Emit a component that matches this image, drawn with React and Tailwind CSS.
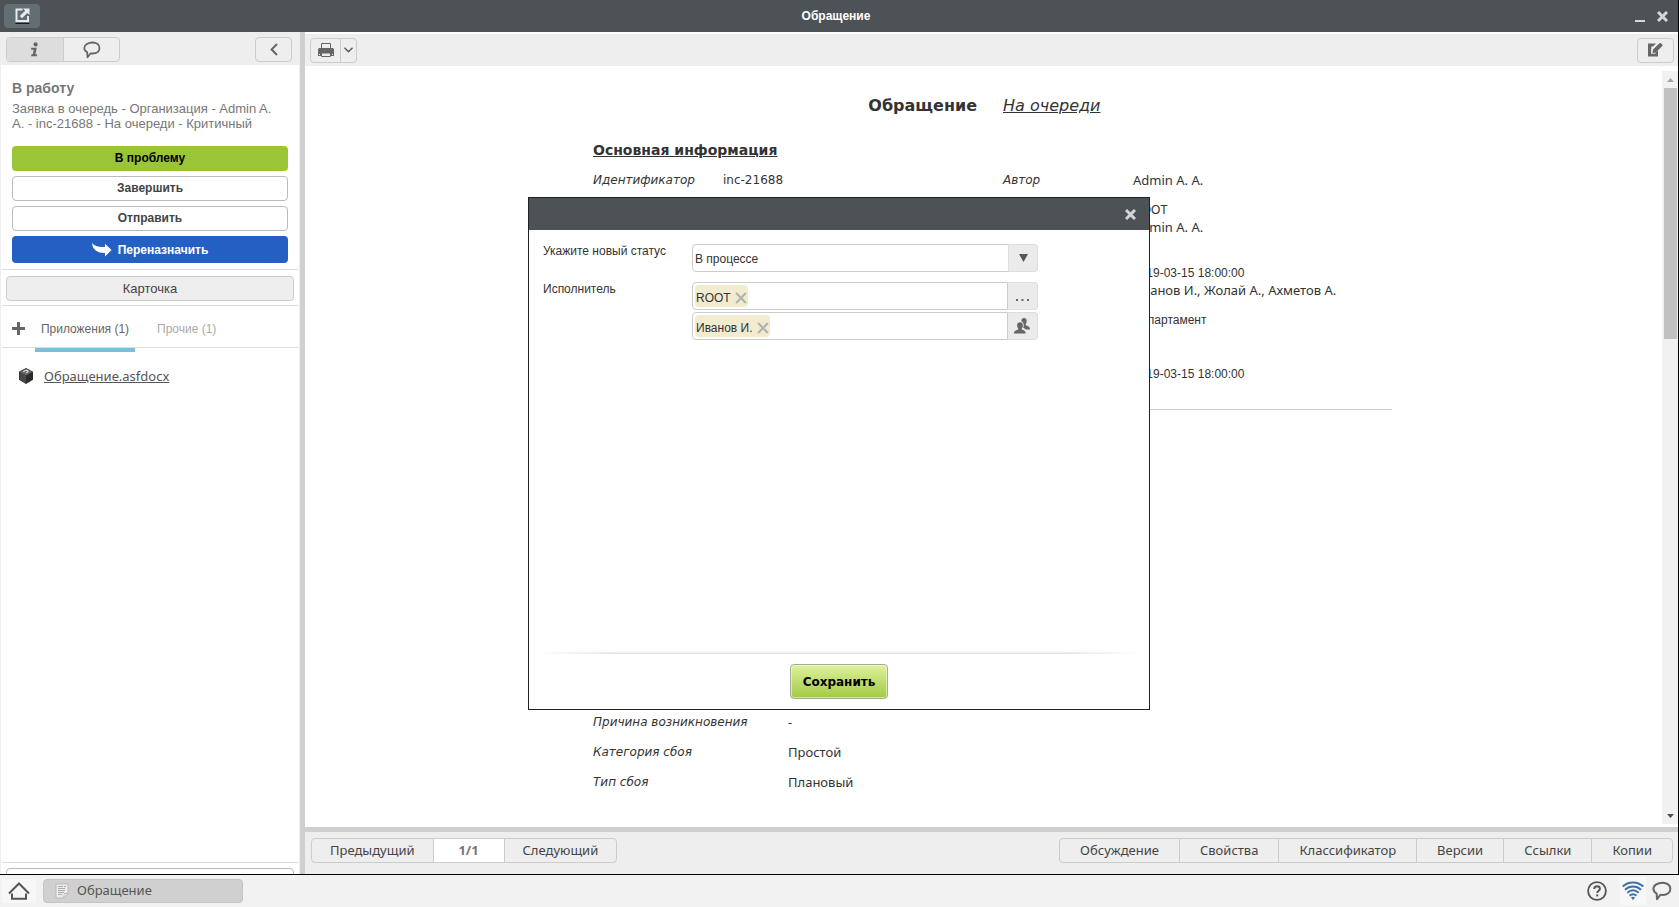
import React, { useState } from "react";
import clsx from "clsx";

const arial = "font-['Liberation_Sans',Arial,sans-serif]";
const noto = "font-['Noto_Sans',sans-serif]";
const verdana = "font-['DejaVu_Sans',Verdana,sans-serif]";

/* ---------- icons ---------- */

const OpenIcon = () => (
  <svg width="15" height="16" viewBox="0 0 15 16" fill="none">
    <path d="M7.500 1.500H1.500v11.500h11.500V8" stroke="#e8eaeb" strokeWidth="2" />
    <path d="M8 .500h6.500V7L12.300 4.900 7 10.200 4.800 8l5.300-5.300z" fill="#e8eaeb" />
    <path d="M.500 15.500h14" stroke="#16191b" />
  </svg>
);

const InfoIcon = () => (
  <svg width="10" height="15" viewBox="0 0 10 15" fill="#666">
    <circle cx="5.600" cy="2.400" r="2.100" />
    <path d="M1.200 5.800h5.600l-1.400 6.400h1.800l-.5 2H1l.5-2h1.300l.9-4.400H1z" />
  </svg>
);

const BubbleIcon = ({ size = 18, width = 1.8 }) => (
  <svg width={size} height={size} viewBox="0 0 18 18" fill="none" stroke="#666" strokeWidth={width} strokeLinejoin="round">
    <path d="M9.500 1.500c4 0 7 2.300 7 5.500s-2.800 5.500-6.800 5.500c-.8 0-1.400 0-2-.2L4.500 16.300l-.3-5C2.300 10.200 1.300 8.800 1.300 7c0-3.200 4-5.500 8.200-5.500z" />
  </svg>
);

const BackIcon = () => (
  <svg width="8" height="13" viewBox="0 0 8 13" fill="none" stroke="#666" strokeWidth="2">
    <path d="M7 1 1.600 6.500 7 12" />
  </svg>
);

const PrinterIcon = () => (
  <svg width="16" height="16" viewBox="0 0 16 16" fill="none">
    <path d="M3.500 6V1.500h9V6" stroke="#666" />
    <path d="M1.500 6h13A1.500 1.500 0 0 1 16 7.500V14h-3v-3H3v3H0V7.500A1.500 1.500 0 0 1 1.500 6z" fill="#666" />
    <path d="M3.500 11v3.500h9V11z" fill="#eee" stroke="#666" />
    <path d="M1.500 12v1M14.500 12v1" stroke="#eee" />
  </svg>
);

const ChevronDown = () => (
  <svg width="9" height="6" viewBox="0 0 9 6" fill="none" stroke="#555" strokeWidth="1.400">
    <path d="m.5.800 4 4 4-4" />
  </svg>
);

const EditIcon = () => (
  <svg width="15" height="14" viewBox="0 0 15 14">
    <path d="M0 .500h8L5 3.500H3.300v7.200H7.500V9.500L10 7.800V13.500H0z" fill="#666" />
    <path d="M4.300 10.200 5 6.500 11.500.300Q12.400-.300 13.200.500l1.100 1.100q.6.800 0 1.500L7.900 9.400z" fill="#666" />
    <path d="M3.800 10.700V6.300L8.900 1.300" stroke="#eee" fill="none" />
  </svg>
);

const ForwardIcon = () => (
  <svg width="20" height="14" viewBox="0 0 20 14" fill="#fff">
    <path d="M0 0c2.500 3.300 6.500 4.500 13 4V.800L19.500 7 13 13.500V10C6 10.300.500 7 0 0z" />
  </svg>
);

const PlusIcon = () => (
  <svg width="13" height="13" viewBox="0 0 13 13" stroke="#666" strokeWidth="3">
    <path d="M6.500 0v13M0 6.500h13" />
  </svg>
);

const CubeIcon = () => (
  <svg width="14" height="16" viewBox="0 0 14 16">
    <path d="M7 0 14 3.700v8L7 16l-7-4.300v-8z" fill="#2b2b2b" />
    <path d="M7 .500 13.400 3.900 7 7.500.600 3.900z" fill="#666" />
    <path d="M7 7.500v8L.600 11.500V4.300z" fill="#484848" />
    <path d="M4.300 3.800q2-2 4.300-1.200 1.400 1-1.500 2.200" fill="none" stroke="#ddd" strokeWidth="1.100" />
  </svg>
);

const CrossIcon = ({ size = 11, color = "#d4d6d7", width = 3 }) => (
  <svg width={size} height={size} viewBox="0 0 11 11" stroke={color} strokeWidth={width}>
    <path d="m1 1 9 9M10 1l-9 9" />
  </svg>
);

const PeopleIcon = () => (
  <svg width="17" height="16" viewBox="0 0 17 16" fill="#666">
    <path d="M7.300 3.200C7.300 1.300 8.300 0 10 0s2.800 1.300 2.700 3c0 1.500-.4 2.300-1 3v1.200c2 .9 4.300 1.200 4.300 4.300h-4.300c-.7-1-1.700-1.300-2.600-1.700C10.300 7.500 10 4.300 7.300 3.200z" />
    <path d="M6 4.200c1.900 0 2.900 1.300 2.900 3 0 1.500-.4 2.400-1.100 3.100v1.100c2 .9 3.900 1.100 3.900 4.100H0c0-3 2.200-3.200 4.200-4.100v-1.100c-.7-.7-1.100-1.600-1.100-3.100 0-1.700 1-3 2.900-3z" />
  </svg>
);

const HomeIcon = () => (
  <svg width="22" height="18" viewBox="0 0 22 18" fill="none" stroke="#555" strokeWidth="2">
    <path d="M1 11.500 11 1.500l10 10" />
    <path d="M4 11.500v5.300h14v-5.300" />
  </svg>
);

const DocIcon = () => (
  <svg width="14" height="16" viewBox="0 0 14 16" fill="none">
    <path d="M1 1h12v9.500L8.500 15H1z" fill="#ececec" stroke="#b9b9b9" />
    <path d="M3 3.500h5M3 5.500h7M3 7.500h7M3 9.500h6M3 11.500h4M9 3.500h2" stroke="#aaa" />
    <path d="M13 10.500H9.500L8.500 15z" fill="#fafafa" stroke="#b9b9b9" />
  </svg>
);

const HelpIcon = () => (
  <svg width="20" height="20" viewBox="0 0 20 20" fill="none" stroke="#555">
    <circle cx="10" cy="10" r="8.900" strokeWidth="1.800" />
    <path d="M7.200 8c0-1.800 1.200-2.800 2.900-2.800 1.600 0 2.800 1 2.800 2.500 0 2-2.700 2.100-2.700 4.400" strokeWidth="1.900" />
    <path d="M10.200 13.400v2" strokeWidth="2" />
  </svg>
);

const SignalIcon = () => (
  <svg width="22" height="20" viewBox="0 0 22 20" fill="none" stroke="#3b73a8" strokeWidth="2">
    <path d="M.700 5.500C6.500 0 15.500 0 21.300 5.500" />
    <path d="M3 8.700c4.700-4.200 11.300-4.200 16 0" />
    <path d="M5.300 11.700c3.500-2.900 7.900-2.900 11.400 0" />
    <path d="M7.500 14.600c2.200-1.700 4.800-1.700 7 0" />
    <path d="M9 16.300q2-1 4 0l-2 3z" fill="#3b73a8" stroke="none" />
  </svg>
);

/* ---------- data ---------- */

const bottomTabs = ["Обсуждение", "Свойства", "Классификатор", "Версии", "Ссылки", "Копии"];

const failureInfo = [
  { label: "Причина возникновения", value: "-" },
  { label: "Категория сбоя", value: "Простой" },
  { label: "Тип сбоя", value: "Плановый" },
];

/* ---------- parts ---------- */

function TitleBar() {
  return (
    <header className="grid h-8 shrink-0 grid-cols-[1fr_auto_1fr] items-center bg-[#4d5256] pl-1 pr-2.5">
      <button aria-label="Открыть" className="flex h-6 w-9 items-center justify-center rounded bg-[#626d74]">
        <OpenIcon />
      </button>
      <h1 className="text-xs font-bold text-white">Обращение</h1>
      <div className="flex items-center justify-end gap-3">
        <button aria-label="Свернуть" className="flex h-3 w-2.5 items-end pt-2">
          <span className="mt-1 h-0.5 w-full bg-[#d4d6d7]" />
        </button>
        <button aria-label="Закрыть">
          <CrossIcon />
        </button>
      </div>
    </header>
  );
}

function Sidebar() {
  const [tab, setTab] = useState("info");

  return (
    <aside className="flex w-[300px] shrink-0 flex-col border-x border-[#eee] bg-white">
      <div className="flex h-[33px] shrink-0 items-end justify-between bg-[#eee] pb-[3px] pl-[5px] pr-[7px]">
        <div className="flex h-[25px] overflow-hidden rounded border border-[#ccc]">
          <button
            aria-label="Информация"
            onClick={() => setTab("info")}
            className={clsx("flex w-14 items-center justify-center", tab === "info" && "bg-[#ddd]")}
          >
            <InfoIcon />
          </button>
          <button
            aria-label="Комментарии"
            onClick={() => setTab("chat")}
            className={clsx("flex w-14 items-center justify-center border-l border-[#ccc]", tab === "chat" && "bg-[#ddd]")}
          >
            <BubbleIcon />
          </button>
        </div>
        <button aria-label="Скрыть панель" className="flex h-[25px] w-[37px] items-center justify-center rounded border border-[#ccc]">
          <BackIcon />
        </button>
      </div>

      <div className="pl-[11px] pr-5 pt-4 text-[#777]">
        <h2 className="text-sm font-bold leading-[15px]">В работу</h2>
        <p className="mt-[5px] text-[13px] leading-[15px]">
          Заявка в очередь - Организация - Admin A. A. - inc-21688 - На очереди - Критичный
        </p>
      </div>

      {/* Actions */}
      <div className="mt-[15px] flex flex-col gap-[5px] px-[11px] pb-1.5 text-xs font-bold text-[#444]">
        <button className="h-[25px] rounded bg-[#9bc437] pb-0.5 text-black">В проблему</button>
        <button className="h-[25px] rounded border border-[#bbb] pb-0.5">Завершить</button>
        <button className="h-[25px] rounded border border-[#bbb] pb-0.5">Отправить</button>
        <button className="flex h-[27px] items-center justify-center gap-1.5 rounded bg-[#2460c3] text-white">
          <ForwardIcon />
          Переназначить
        </button>
      </div>

      <div className="mx-px border-y border-[#ddd] px-1 pb-1 pt-1.5">
        <button className="h-[25px] w-full rounded border border-[#ccc] bg-[#eee] text-[13px] text-[#444]">Карточка</button>
      </div>

      {/* Attachments */}
      <div className="mx-px flex h-[42px] items-center border-b border-[#ddd] pl-2.5 pt-1 text-xs">
        <button aria-label="Добавить">
          <PlusIcon />
        </button>
        <button className="relative ml-2.5 h-[38px] w-[100px] text-[#666] after:absolute after:inset-x-0 after:-bottom-1 after:h-1 after:bg-[#7bbfe0]">
          Приложения (1)
        </button>
        <button className="ml-[22px] text-[#aaa]">Прочие (1)</button>
      </div>

      <ul className="px-[18px] pt-[19px]">
        <li className="flex items-center gap-[11px]">
          <CubeIcon />
          <a href="#file" className={clsx(noto, "text-[13px] leading-[18px] text-[#555] underline")}>
            Обращение.asfdocx
          </a>
        </li>
      </ul>

      {/* Collapsed footer, only the top edge of its box is visible */}
      <div className="mx-px mt-auto h-3 shrink-0 overflow-hidden border-t border-[#ddd] px-1 pt-[5px]">
        <div className="h-6 rounded border border-[#bbb]" />
      </div>
    </aside>
  );
}

function Document() {
  return (
    <div className="flex min-h-0 flex-1 bg-white">
      <article className={clsx(verdana, "min-w-0 flex-1 overflow-hidden pl-[18px] pt-7 text-xs leading-[17px] text-[#333]")}>
        <div className="mx-auto w-[799px]">
          <div className="grid grid-cols-[384px_1fr] gap-[26px] text-base leading-6">
            <h2 className="text-right font-bold">Обращение</h2>
            <span className="italic underline">На очереди</span>
          </div>

          <h3 className="mt-[22px] text-sm font-bold leading-5 underline">Основная информация</h3>

          <div className="mt-3 grid grid-cols-[410px_1fr] border-b border-[#ccc] pb-[26px]">
            <dl className="grid grid-cols-[130px_1fr] content-start">
              <dt className="italic">Идентификатор</dt>
              <dd>inc-21688</dd>
            </dl>
            <dl className="grid grid-cols-[130px_1fr] gap-y-[13px]">
              <dt className="italic">Автор</dt>
              <dd className={clsx(noto, "text-[13px] leading-[17px]")}>Admin A. A.</dd>
              <dd className={clsx(noto, "col-start-2 text-[13px] leading-[17px]")}>
                <p className={clsx(arial, "text-xs leading-[17px]")}>ROOT</p>
                <p>Admin A. A.</p>
              </dd>
              <dd className={clsx(noto, "col-start-2 pt-4 text-[13px] leading-[17px]")}>
                <p className={clsx(arial, "text-xs leading-[17px]")}>2019-03-15 18:00:00</p>
                <p>Иванов И., Жолай А., Ахметов А.</p>
              </dd>
              <dd className={clsx(arial, "col-start-2")}>Департамент</dd>
              <dd className={clsx(arial, "col-start-2 pt-6")}>2019-03-15 18:00:00</dd>
            </dl>
          </div>

          <dl className="mt-[304px] grid grid-cols-[195px_1fr] gap-y-[13px]">
            {failureInfo.map((row) => (
              <React.Fragment key={row.label}>
                <dt className="italic">{row.label}</dt>
                <dd className={clsx(noto, "text-[13px] leading-[17px]")}>{row.value}</dd>
              </React.Fragment>
            ))}
          </dl>
        </div>
      </article>

      {/* Scrollbar */}
      <div className="mb-[3px] mt-[5px] flex w-4 shrink-0 flex-col items-center bg-[#f1f1f1]">
        <span className="flex h-[17px] items-center">
          <svg width="7" height="4" viewBox="0 0 7 4" fill="#a3a3a3"><path d="M0 4 3.500 0 7 4z" /></svg>
        </span>
        <div className="h-1/3 w-[13px] bg-[#c1c1c1]" />
        <span className="mt-auto flex h-[17px] items-center">
          <svg width="7" height="4" viewBox="0 0 7 4" fill="#505050"><path d="M0 0h7L3.500 4z" /></svg>
        </span>
      </div>
    </div>
  );
}

function BottomBar() {
  return (
    <footer className={clsx(noto, "flex h-[47px] shrink-0 justify-between border-t-[5px] border-[#cfcfcf] bg-[#eee] pl-1.5 pr-[5px] pt-1.5 text-[13px] text-[#444]")}>
      <div className="flex h-[25px] divide-x divide-[#ccc] overflow-hidden rounded border border-[#ccc]">
        <button className="px-[18px]">Предыдущий</button>
        <span className="flex w-[71px] items-center justify-center bg-white font-bold text-[#777]">1/1</span>
        <button className="px-[18px]">Следующий</button>
      </div>
      <div className="flex h-[25px] divide-x divide-[#ccc] rounded border border-[#ccc]">
        {bottomTabs.map((name) => (
          <button key={name} className="px-5">{name}</button>
        ))}
      </div>
    </footer>
  );
}

function TagField({ id, tag, children, buttonLabel }) {
  return (
    <div className="flex h-7">
      <div className="flex min-w-0 flex-1 items-center rounded-l border border-[#ccc] bg-white pl-0.5">
        <span className="flex h-[22px] shrink-0 items-center gap-1 rounded-sm bg-[#f1ecd0] px-px pt-[3px] text-[#333]">
          {tag}
          <button aria-label={`Удалить ${tag}`}>
            <CrossIcon size={12} color="#b3b3ad" width={2} />
          </button>
        </span>
        <input id={id} aria-label="Исполнитель" className="min-w-0 flex-1 outline-none" />
      </div>
      <button aria-label={buttonLabel} className="flex w-[30px] items-center justify-center rounded-r border border-l-0 border-[#ddd] bg-[#ebebeb]">
        {children}
      </button>
    </div>
  );
}

function StatusDialog() {
  const [status, setStatus] = useState("В процессе");

  return (
    <div className="fixed inset-0 flex items-center justify-center pr-px">
      <div role="dialog" aria-label="Статус" className="flex h-[513px] w-[622px] flex-col border border-[#222] bg-white text-xs text-[#333]">
        <div className="flex h-8 shrink-0 items-center justify-end bg-[#4d5256] pr-[13px]">
          <button aria-label="Закрыть окно">
            <CrossIcon />
          </button>
        </div>

        <div className="grid flex-1 grid-cols-[149px_346px] content-start gap-y-2.5 pl-3.5 pt-3.5">
          <label htmlFor="status" className="leading-[14px]">Укажите новый статус</label>
          <div className="relative flex h-7">
            <select
              id="status"
              value={status}
              onChange={(e) => setStatus(e.target.value)}
              className="w-full appearance-none rounded border border-[#ccc] bg-white pl-0.5 pt-0.5 outline-none"
            >
              <option>В процессе</option>
              <option>На очереди</option>
            </select>
            <span className="pointer-events-none absolute inset-y-0 right-0 flex w-[30px] items-center justify-center rounded-r border border-[#ddd] bg-[#ebebeb]">
              <svg width="9" height="8" viewBox="0 0 9 8" fill="#555"><path d="M0 0h9L4.500 8z" /></svg>
            </span>
          </div>

          <label htmlFor="group" className="leading-[14px]">Исполнитель</label>
          <div className="flex flex-col gap-0.5">
            <TagField id="group" tag="ROOT" buttonLabel="Выбрать группу">
              <svg width="13" height="10" viewBox="0 0 13 10" fill="#666"><path d="M0 8h2v2H0zM5.500 8h2v2h-2zM11 8h2v2h-2z" /></svg>
            </TagField>
            <TagField id="person" tag="Иванов И." buttonLabel="Выбрать сотрудника">
              <PeopleIcon />
            </TagField>
          </div>
        </div>

        <div className="mx-2.5 h-[3px] shrink-0 bg-[linear-gradient(to_right,white,transparent_12%,transparent_88%,white),linear-gradient(to_bottom,white,#ddd)]" />
        <div className="flex h-[55px] shrink-0 justify-center pt-2.5">
          <button className="h-[35px] rounded-sm border border-[#a3ad93] bg-linear-to-b from-[#def39a] to-[#a2c940] px-3 font-['DejaVu_Sans',Verdana,sans-serif] text-xs font-bold text-black shadow-[inset_0_0_0_1px_rgba(255,255,255,0.5)]">
            Сохранить
          </button>
        </div>
      </div>
    </div>
  );
}

function TaskBar() {
  return (
    <nav className="flex h-8 shrink-0 items-center justify-between bg-[#f2f2f2] pl-0.5 pr-[7px]">
      <div className="flex items-center gap-[7px]">
        <button aria-label="Главная" className="flex h-6 w-[34px] items-center justify-center bg-[#f7f7f7]">
          <HomeIcon />
        </button>
        <button className={clsx(noto, "flex h-6 w-[200px] items-center gap-2 rounded border border-[#c4c4c4] bg-[#d0d0d0] pl-[11px] text-[13px] text-[#555]")}>
          <DocIcon />
          Обращение
        </button>
      </div>
      <div className="flex items-center">
        <button aria-label="Помощь" className="mr-[13px]"><HelpIcon /></button>
        <button aria-label="Соединение" className="flex h-7 w-[26px] items-center justify-center bg-[#f7f7f7]"><SignalIcon /></button>
        <button aria-label="Сообщения" className="ml-1.5"><BubbleIcon size={20} /></button>
      </div>
    </nav>
  );
}

export default function App() {
  return (
    <div className={clsx(arial, "flex h-screen flex-col bg-white")}>
      <div className="flex min-h-0 flex-1 flex-col border-b border-r border-black">
        <TitleBar />
        <div className="flex min-h-0 flex-1">
          <Sidebar />
          <main className="flex min-w-0 flex-1 flex-col border-l-[5px] border-[#cfcfcf]">
            <div className="mt-0.5 flex h-8 shrink-0 items-center justify-between bg-[#eee] pl-[5px] pr-1">
              <div className="flex h-[25px] rounded border border-[#ccc]">
                <button aria-label="Печать" className="flex w-[29px] items-center justify-center">
                  <PrinterIcon />
                </button>
                <button aria-label="Варианты печати" className="flex w-4 items-center justify-center border-l border-[#ccc]">
                  <ChevronDown />
                </button>
              </div>
              <button aria-label="Редактировать" className="flex h-[25px] w-[37px] items-center justify-center rounded border border-[#ccc]">
                <EditIcon />
              </button>
            </div>
            <Document />
            <BottomBar />
          </main>
        </div>
      </div>
      <TaskBar />
      <StatusDialog />
    </div>
  );
}
